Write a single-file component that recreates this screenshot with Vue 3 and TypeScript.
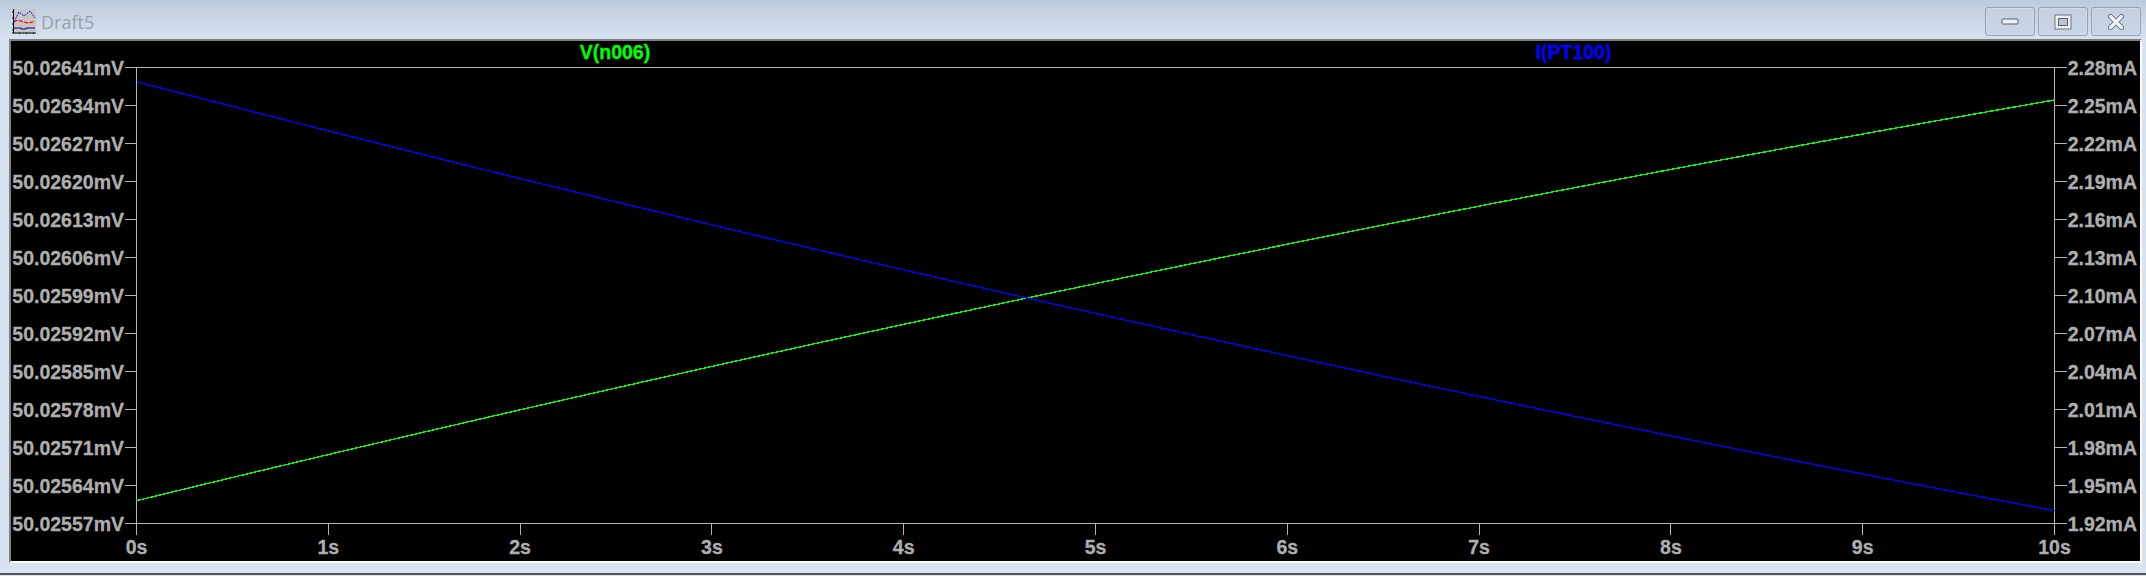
<script setup lang="ts">
const left = 136.5
const right = 2054.5
const top = 67.5
const bottom = 523.5
const ox = -11
const oy = -41

const leftVals = ['50.02641','50.02634','50.02627','50.02620','50.02613','50.02606','50.02599','50.02592','50.02585','50.02578','50.02571','50.02564','50.02557']
const rightVals = ['2.28','2.25','2.22','2.19','2.16','2.13','2.10','2.07','2.04','2.01','1.98','1.95','1.92']

const yTicks = leftVals.map((v, i) => ({
  y: top + oy + (i * (bottom - top)) / 12,
  left: v + 'mV',
  right: rightVals[i] + 'mA',
}))
const xTicks = Array.from({ length: 11 }, (_, i) => ({
  x: left + ox + (i * (right - left)) / 10,
  label: i + 's',
}))

function trace(y0: number, a: number, b: number): string {
  const pts: string[] = []
  for (let i = 0; i <= 96; i++) {
    const t = i / 96
    const x = left + ox + t * (right - left)
    const y = y0 + oy + a * t + b * t * t
    pts.push(`${x.toFixed(2)},${y.toFixed(2)}`)
  }
  return pts.join(' ')
}
const greenLine = trace(500.7, -467.6, 66.9)
const blueLine = trace(81.7, 497.8, -68.8)
</script>

<template>
  <div class="window">
    <header class="titlebar">
      <div class="title">
        <svg class="app-icon" width="24" height="25" viewBox="0 0 24 25">
          <rect x="1" y="0" width="23" height="24" fill="#c6c6c6" />
          <path d="M1.5 0V24M0 24H24" stroke="#000" fill="none" stroke-width="1" />
          <path d="M0 3H1M0 9H1M0 15H1M0 21H1M7.5 24v1M14.5 24v1M21.5 24v1" stroke="#000" />
          <path d="M2 13L7 3L12 7L18 2L23 9" stroke="#0000ff" fill="none" stroke-dasharray="2 1" />
          <path d="M2 13L6 11L12 13L17 14L23 12" stroke="#ff0000" fill="none" stroke-width="1.2" stroke-dasharray="4 1.5" />
          <path d="M2 19H8L10 20H13L15 19H23" stroke="#0000a0" fill="none" stroke-width="1.2" />
        </svg>
        <span class="title-text">Draft5</span>
      </div>
      <div class="controls">
        <button class="ctl" type="button" aria-label="Minimize">
          <svg width="18" height="8" viewBox="0 0 18 8"><rect x="1" y="1" width="16" height="5" rx="1" fill="#eef1f5" stroke="#565f6b" /></svg>
        </button>
        <button class="ctl" type="button" aria-label="Restore">
          <svg width="18" height="16" viewBox="0 0 18 16"><rect x="1" y="1" width="16" height="14" fill="#eef1f5" stroke="#6d7580" /><rect x="4.5" y="4.5" width="9" height="7" fill="#b9c6d6" stroke="#565f6b" /></svg>
        </button>
        <button class="ctl" type="button" aria-label="Close">
          <svg width="18" height="16" viewBox="0 0 18 16"><path d="M3.5 2.5L14.5 13.5M14.5 2.5L3.5 13.5" fill="none" stroke="#5a6370" stroke-width="5" stroke-linecap="round" /><path d="M3.5 2.5L14.5 13.5M14.5 2.5L3.5 13.5" fill="none" stroke="#f2f4f6" stroke-width="3.4" stroke-linecap="round" /></svg>
        </button>
      </div>
    </header>

    <div class="plot">
      <svg class="chart" width="2129" height="520" viewBox="0 0 2129 520" shape-rendering="crispEdges">
        <g stroke="#b4b4b4" stroke-width="1">
          <line :x1="left + ox" :x2="left + ox" :y1="top + oy" :y2="bottom + oy + 11" />
          <line :x1="right + ox" :x2="right + ox" :y1="top + oy" :y2="bottom + oy + 11" />
          <line :x1="left + ox" :x2="right + ox" :y1="top + oy" :y2="top + oy" />
          <line :x1="left + ox" :x2="right + ox" :y1="bottom + oy" :y2="bottom + oy" />
          <template v-for="t in yTicks" :key="t.y">
            <line :x1="left + ox - 12" :x2="left + ox" :y1="t.y" :y2="t.y" />
            <line :x1="right + ox" :x2="right + ox + 12" :y1="t.y" :y2="t.y" />
          </template>
          <line v-for="t in xTicks" :key="t.x" :x1="t.x" :x2="t.x" :y1="bottom + oy" :y2="bottom + oy + 11" />
        </g>

        <polyline :points="greenLine" fill="none" stroke="#00ff00" stroke-width="1.4" />
        <polyline :points="blueLine" fill="none" stroke="#0000ff" stroke-width="1.4" />

        <g class="tick-text">
          <text v-for="t in yTicks" :key="t.left" x="113" :y="t.y + 7" text-anchor="end">{{ t.left }}</text>
          <text v-for="t in yTicks" :key="t.right" x="2126" :y="t.y + 7" text-anchor="end">{{ t.right }}</text>
          <text v-for="t in xTicks" :key="t.label" :x="t.x" y="512.5" text-anchor="middle">{{ t.label }}</text>
        </g>
        <text class="trace" x="604" y="18" text-anchor="middle" fill="#00ff00" stroke="#00ff00">V(n006)</text>
        <text class="trace" x="1562.5" y="18" text-anchor="middle" fill="#0000ff" stroke="#0000ff">I(PT100)</text>
      </svg>
    </div>
    <div class="bottom-rule"></div>
  </div>
</template>

<style scoped>
.window {
  width: 2146px;
  height: 576px;
  display: flex;
  flex-direction: column;
  background: linear-gradient(180deg, #bccbdb 0, #d7e3f0 40px, #d7e3f0 100%);
  overflow: hidden;
}
.titlebar {
  height: 39px;
  padding: 7px 5px 0 12px;
  box-sizing: border-box;
  display: flex;
  justify-content: space-between;
  align-items: flex-start;
  flex: none;
}
.title {
  display: flex;
  align-items: center;
  gap: 5px;
  margin-top: 2px;
}
.app-icon {
  display: block;
}
.title-text {
  font-family: "Open Sans", "Liberation Sans", sans-serif;
  font-size: 18px;
  line-height: 24px;
  color: #9a9fa6;
}
.controls {
  display: flex;
  gap: 3px;
}
.ctl {
  width: 50px;
  height: 29px;
  padding: 0;
  border: 1px solid #8ea1b7;
  border-radius: 3px;
  background: linear-gradient(180deg, #c3d0df, #c9d6e5);
  box-shadow: inset 0 0 0 1px rgba(255, 255, 255, 0.22);
  display: flex;
  align-items: center;
  justify-content: center;
}
.ctl svg {
  display: block;
}
.plot {
  margin: 0 4px 0 9px;
  height: 524px;
  flex: none;
  box-sizing: border-box;
  background: #000;
  border-top: 2px solid #7f7f7f;
  border-left: 2px solid #7f7f7f;
  border-right: 2px solid #fff;
  border-bottom: 2px solid #fff;
}
.chart {
  display: block;
}
.tick-text text {
  font-family: "Liberation Sans", Arial, sans-serif;
  font-size: 19.5px;
  font-weight: 700;
  fill: #aeaeae;
  stroke: #aeaeae;
  stroke-width: 0.3px;
  shape-rendering: auto;
}
.trace {
  font-family: "Liberation Sans", Arial, sans-serif;
  font-size: 19.5px;
  font-weight: 700;
  stroke-width: 0.3px;
}
.bottom-rule {
  margin-top: 10px;
  height: 2px;
  background: #555;
  flex: none;
}
</style>
